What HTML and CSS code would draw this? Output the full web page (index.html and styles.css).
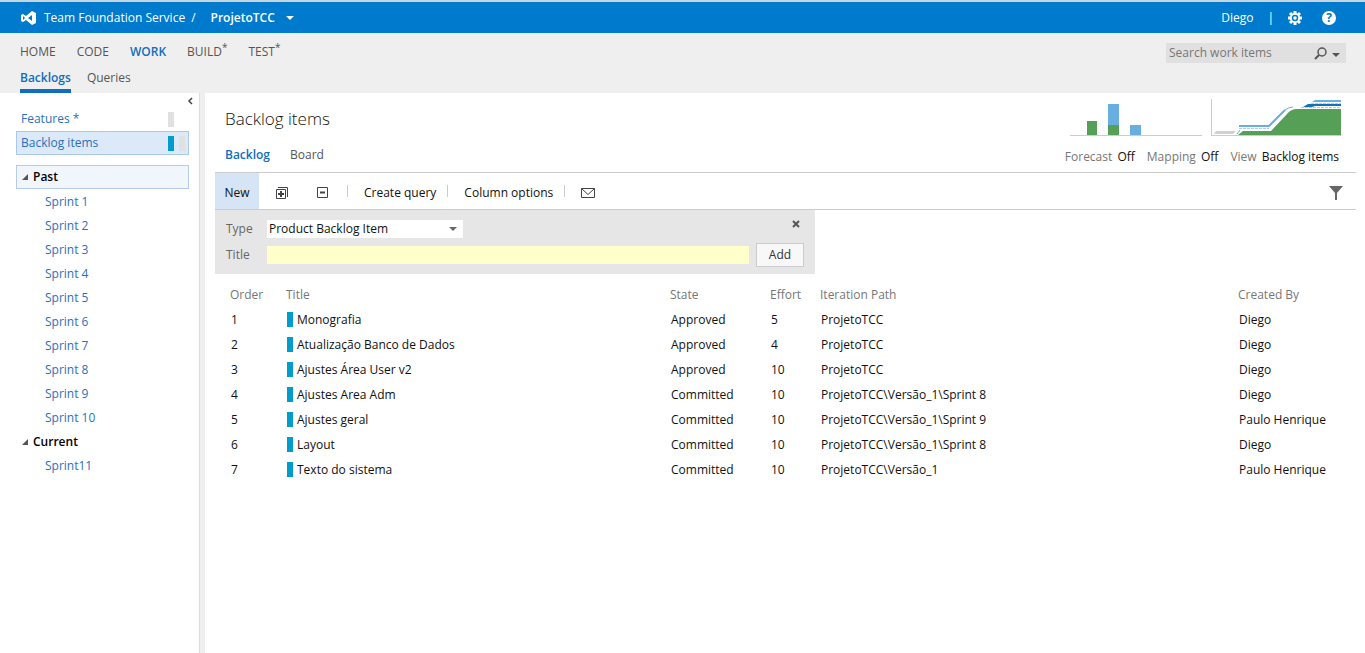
FILE: index.html
```
<!DOCTYPE html>
<html lang="en">
  <head>
    <meta charset="UTF-8" />
    <meta name="viewport" content="width=device-width, initial-scale=1.0" />
    <title>Backlog items - Team Foundation Service</title>
    <link rel="stylesheet" href="styles.css">
  </head>
  <body>
    <header class="header">
      <svg class="logo" width="16" height="14" viewBox="0 0 16 14">
        <path fill="#fff" fill-rule="evenodd" d="M11 0L15 2V12L11 14L5 9L2 11L0 10V4L2 3L5 5ZM11 4L7 7L11 10ZM2 5V9L4 7Z" />
      </svg>
      <a class="brand" href="#">Team Foundation Service</a>
      <span class="slash">/</span>
      <button class="project">ProjetoTCC <i class="caret"></i></button>
      <div class="user">
        <a href="#">Diego</a>
        <span class="bar">|</span>
        <button aria-label="Settings">
          <svg width="14" height="14" viewBox="0 0 14 14">
            <path stroke="#fff" stroke-width="3" d="M7 0V14M0 7H14M2 2L12 12M12 2L2 12" />
            <circle cx="7" cy="7" r="5" fill="#fff" />
            <circle cx="7" cy="7" r="2.500" fill="#fff" stroke="#007acc" stroke-width="1.500" />
          </svg>
        </button>
        <button class="help" aria-label="Help">?</button>
      </div>
    </header>

    <div class="nav">
      <div>
        <nav class="hubs">
          <a href="#">HOME</a>
          <a href="#">CODE</a>
          <a class="active" href="#">WORK</a>
          <a href="#">BUILD<sup>*</sup></a>
          <a href="#">TEST<sup>*</sup></a>
        </nav>
        <nav class="sub-hubs">
          <a class="active" href="#">Backlogs</a>
          <a href="#">Queries</a>
        </nav>
      </div>
      <form class="search">
        <input type="text" placeholder="Search work items" aria-label="Search work items" />
        <button type="button" aria-label="Search">
          <svg width="13" height="13" viewBox="0 0 13 13" fill="none" stroke="#555">
            <circle cx="8" cy="5" r="4" stroke-width="1.5" />
            <path stroke-width="2" d="M5 8L1 12" />
          </svg>
        </button>
        <button type="button" aria-label="Search options"><i class="caret"></i></button>
      </form>
    </div>

    <div class="content">
      <aside class="sidebar">
        <button class="collapse" aria-label="Collapse">
          <svg width="6" height="8" viewBox="0 0 6 8" fill="none" stroke="#444" stroke-width="1.5"><path d="M5 1L2 4L5 7" /></svg>
        </button>
        <ul class="levels">
          <li><a href="#">Features *</a><i class="mark"></i></li>
          <li class="active"><a href="#">Backlog items</a><i class="mark blue"></i><i class="mark"></i></li>
        </ul>
        <h3 class="group boxed"><i class="arrow"></i>Past</h3>
        <ul class="sprints">
          <li><a href="#">Sprint 1</a></li>
          <li><a href="#">Sprint 2</a></li>
          <li><a href="#">Sprint 3</a></li>
          <li><a href="#">Sprint 4</a></li>
          <li><a href="#">Sprint 5</a></li>
          <li><a href="#">Sprint 6</a></li>
          <li><a href="#">Sprint 7</a></li>
          <li><a href="#">Sprint 8</a></li>
          <li><a href="#">Sprint 9</a></li>
          <li><a href="#">Sprint 10</a></li>
        </ul>
        <h3 class="group"><i class="arrow"></i>Current</h3>
        <ul class="sprints">
          <li><a href="#">Sprint11</a></li>
        </ul>
      </aside>

      <main class="main">
        <div class="top">
          <div>
            <h1>Backlog items</h1>
            <nav class="tabs">
              <a class="active" href="#">Backlog</a>
              <a href="#">Board</a>
            </nav>
          </div>
          <div class="summary">
            <div class="charts">
              <svg width="132" height="37" viewBox="0 0 132 37">
                <path fill="#ccc" d="M0 36H132V37H0Z" />
                <path fill="#569f56" d="M17 22H27V36H17ZM38 26H49V36H38Z" />
                <path fill="#69aee0" d="M38 5H49V26H38ZM60 26H71V36H60Z" />
              </svg>
              <svg width="130" height="37" viewBox="0 0 130 37">
                <path fill="#ccc" d="M0 0H1V36H130V37H0Z" />
                <path fill="#d0d0d0" d="M5 32H25L22 35H3Z" />
                <path fill="#569f56" d="M27 36L32 32H60L76 15Q80 10 86 10H130V36Z" />
                <path fill="none" stroke="#69aee0" stroke-width="2" d="M28 27H58L74 11" />
                <path fill="none" stroke="#69aee0" d="M74 11Q78 8 82 8M26 35L29 31" />
                <path fill="none" stroke="#a9d0ee" stroke-dasharray="3 1" d="M28 29.500H58M100 4.500H130M90 8.500H130" />
                <path fill="#1072ba" d="M92 8L97 5H130V7H104L101 8Z" />
                <path fill="#69aee0" d="M101 3L104 1H130V3Z" />
              </svg>
            </div>
            <div class="options">
              <span>Forecast <a href="#">Off</a></span>
              <span>Mapping <a href="#">Off</a></span>
              <span>View <a href="#">Backlog items</a></span>
            </div>
          </div>
        </div>

        <div class="toolbar">
          <button class="new">New</button>
          <button class="icon" aria-label="Expand all">
            <svg width="12" height="12" viewBox="0 0 12 12" fill="none" stroke="#444"><path d="M.5 2.5H9.500V11.500H.5ZM2 .5H11.500V10" /><path stroke-width="2" d="M2 7H8M5 4V10" /></svg>
          </button>
          <button class="icon" aria-label="Collapse all">
            <svg width="11" height="11" viewBox="0 0 11 11" fill="none" stroke="#444"><path d="M.5 .5H10.500V10.500H.5Z" /><path stroke-width="2" d="M3 5.500H8" /></svg>
          </button>
          <i class="sep"></i>
          <button>Create query</button>
          <i class="sep"></i>
          <button>Column options</button>
          <i class="sep"></i>
          <button aria-label="Email">
            <svg width="14" height="10" viewBox="0 0 14 10" fill="none" stroke="#444"><path d="M.5 .5H13.500V9.500H.5ZM.5 .5L7 6.500L13.500 .5" /></svg>
          </button>
          <button class="filter" aria-label="Filter">
            <svg width="14" height="14" viewBox="0 0 14 14"><path fill="#666" d="M0 0H14L8 7V14H6V7Z" /></svg>
          </button>
        </div>

        <form class="add-panel">
          <label for="type">Type</label>
          <div class="select">
            <select id="type">
              <option>Product Backlog Item</option>
            </select>
            <i class="caret"></i>
          </div>
          <button class="close" type="button" aria-label="Close">
            <svg width="8" height="8" viewBox="0 0 8 8" stroke="#555" stroke-width="2"><path d="M1 1L7 7M7 1L1 7" /></svg>
          </button>
          <label for="title">Title</label>
          <input id="title" type="text" />
          <button class="add" type="button">Add</button>
        </form>

        <table class="grid">
          <thead>
            <tr>
              <th class="order">Order</th>
              <th class="title">Title</th>
              <th class="state">State</th>
              <th class="effort">Effort</th>
              <th class="path">Iteration Path</th>
              <th>Created By</th>
            </tr>
          </thead>
          <tbody>
            <tr><td>1</td><td><i class="mark blue"></i>Monografia</td><td>Approved</td><td>5</td><td>ProjetoTCC</td><td>Diego</td></tr>
            <tr><td>2</td><td><i class="mark blue"></i>Atualização Banco de Dados</td><td>Approved</td><td>4</td><td>ProjetoTCC</td><td>Diego</td></tr>
            <tr><td>3</td><td><i class="mark blue"></i>Ajustes Área User v2</td><td>Approved</td><td>10</td><td>ProjetoTCC</td><td>Diego</td></tr>
            <tr><td>4</td><td><i class="mark blue"></i>Ajustes Area Adm</td><td>Committed</td><td>10</td><td>ProjetoTCC\Versão_1\Sprint 8</td><td>Diego</td></tr>
            <tr><td>5</td><td><i class="mark blue"></i>Ajustes geral</td><td>Committed</td><td>10</td><td>ProjetoTCC\Versão_1\Sprint 9</td><td>Paulo Henrique</td></tr>
            <tr><td>6</td><td><i class="mark blue"></i>Layout</td><td>Committed</td><td>10</td><td>ProjetoTCC\Versão_1\Sprint 8</td><td>Diego</td></tr>
            <tr><td>7</td><td><i class="mark blue"></i>Texto do sistema</td><td>Committed</td><td>10</td><td>ProjetoTCC\Versão_1</td><td>Paulo Henrique</td></tr>
          </tbody>
        </table>
      </main>
    </div>
  </body>
</html>
```
FILE: styles.css
```
* {
  box-sizing: border-box;
}
body {
  display: flex;
  flex-direction: column;
  min-height: 100vh;
  margin: 0;
  font: 12px/24px "Open Sans", "Noto Sans", sans-serif;
  color: #111;
  background: #fff;
}
ul {
  margin: 0;
  padding: 0;
  list-style: none;
}
a {
  color: inherit;
  text-decoration: none;
}
button,
input,
select {
  margin: 0;
  padding: 0;
  border: 0;
  border-radius: 0;
  font: inherit;
  color: inherit;
  background: none;
}
svg {
  display: block;
}
.caret {
  display: inline-block;
  border: 4px solid transparent;
  border-top-color: currentColor;
  border-bottom: 0;
}

/* header */
.header {
  display: flex;
  align-items: center;
  height: 33px;
  padding: 0 29px 0 21px;
  border-top: 2px solid #c8d4dc;
  color: #fff;
  background: #007acc;
}
.brand {
  margin-left: 7px;
}
.slash {
  margin: 0 15px 0 6px;
}
.project {
  font-weight: 600;
}
.project .caret {
  margin-left: 8px;
  vertical-align: 2px;
}
.user {
  display: flex;
  align-items: center;
  margin-left: auto;
}
.user .bar {
  margin: 0 14px;
}
.help {
  width: 14px;
  height: 14px;
  margin-left: 20px;
  border-radius: 50%;
  font-weight: 700;
  line-height: 14px;
  color: #007acc;
  background: #fff;
}

/* nav */
.nav {
  display: flex;
  justify-content: space-between;
  padding: 6px 19px 0 20px;
  color: #555;
  background: #efefef;
}
.hubs,
.sub-hubs {
  display: flex;
}
.hubs {
  gap: 21px;
  height: 26px;
  line-height: 26px;
}
.hubs sup {
  font-size: 10px;
  line-height: 0;
}
.sub-hubs {
  gap: 16px;
  line-height: 26px;
}
.sub-hubs a {
  height: 28px;
  border-bottom: 4px solid transparent;
}
.nav .active {
  font-weight: 600;
  color: #106ebe;
}
.sub-hubs .active {
  border-color: #106ebe;
}
.search {
  display: flex;
  align-items: center;
  width: 180px;
  height: 20px;
  margin-top: 4px;
  padding: 0 6px 0 3px;
  background: #e0e0e0;
}
.search input {
  flex: 1;
  min-width: 0;
  height: 20px;
}
.search input::placeholder {
  color: #777;
}
.search button + button {
  margin-left: 5px;
  line-height: 12px;
}

/* sidebar */
.content {
  display: flex;
  flex: 1;
}
.sidebar {
  position: relative;
  width: 205px;
  padding: 14px 16px 0;
  border-right: 5px solid #efefef;
  box-shadow: inset -1px 0 #ddd;
  color: #2a70c0;
}
.sidebar .levels,
.sidebar .group {
  width: 173px;
}
.collapse {
  position: absolute;
  top: 4px;
  right: 7px;
}
.levels li {
  display: flex;
  align-items: center;
  height: 24px;
  padding: 0 15px 0 5px;
}
.levels a {
  flex: 1;
  line-height: 26px;
}
.levels .active {
  padding: 0 3px 0 4px;
  border: 1px solid #a9c9ec;
  background: #dbe9f8;
}
.mark {
  display: inline-block;
  width: 6px;
  height: 15px;
  background: #e0e0e0;
}
.mark.blue {
  background: #009ccc;
}
.levels .mark + .mark {
  margin-left: 5px;
}
.group {
  display: flex;
  align-items: center;
  height: 24px;
  margin: 0;
  padding-left: 6px;
  font-size: 12px;
  font-weight: 600;
  line-height: 26px;
  color: #000;
}
.boxed {
  margin: 10px 0 1px;
  padding-left: 5px;
  border: 1px solid #b5cdea;
  background: #f1f6fd;
}
.arrow {
  margin-right: 5px;
  border-left: 6px solid transparent;
  border-bottom: 6px solid #555;
}
.sprints a {
  display: block;
  padding-left: 29px;
}

/* main */
.main {
  flex: 1;
  min-width: 0;
  padding: 0 9px 0 10px;
}
.top {
  display: flex;
  justify-content: space-between;
  height: 79px;
  padding: 6px 15px 0 10px;
}
h1 {
  margin: 7px 0 11px;
  font-size: 17px;
  font-weight: 300;
  line-height: 26px;
}
.tabs {
  display: flex;
  gap: 20px;
  color: #555;
}
.tabs .active {
  font-weight: 600;
  color: #106ebe;
}
.charts {
  display: flex;
  justify-content: flex-end;
  gap: 9px;
}
.options {
  display: flex;
  justify-content: flex-end;
  gap: 12px;
  margin-top: 9px;
  padding-right: 2px;
  color: #777;
}
.options a {
  margin-left: 2px;
  color: #111;
}
.toolbar {
  display: flex;
  align-items: center;
  height: 38px;
  padding-right: 13px;
  border: solid #ccc;
  border-width: 1px 0;
}
.toolbar button {
  padding-top: 3px;
}
.toolbar .new {
  width: 44px;
  height: 36px;
  background: #d6e5f5;
}
.icon {
  margin-left: 17px;
}
.icon + .icon {
  margin-left: 29px;
}
.sep {
  width: 1px;
  height: 12px;
  margin: 0 16px 0 11px;
  background: #ccc;
}
.icon + .sep {
  margin-left: 19px;
}
.filter {
  margin-left: auto;
}

/* new item */
.add-panel {
  display: grid;
  grid-template-columns: 34px 1fr 48px;
  gap: 2px 7px;
  align-items: center;
  width: 600px;
  padding: 7px 11px;
  color: #666;
  background: #e6e6e6;
}
.select {
  position: relative;
  width: 196px;
  height: 18px;
}
.select select {
  display: block;
  width: 100%;
  height: 18px;
  padding-left: 2px;
  line-height: 18px;
  color: #111;
  background: #fff;
  appearance: none;
}
.select .caret {
  position: absolute;
  top: 7px;
  right: 6px;
  pointer-events: none;
}
.close {
  justify-self: end;
  margin: 0 4px 10px 0;
}
.add-panel input {
  height: 18px;
  padding: 0 2px;
  background: #ffffcc;
}
.add {
  height: 24px;
  border: 1px solid #ccc;
  line-height: 22px;
  color: #333;
  background: #f8f8f8;
}

/* backlog grid */
.grid {
  width: 100%;
  margin-top: 9px;
  padding-left: 10px;
  border-spacing: 0;
  table-layout: fixed;
}
.grid th {
  padding: 0 5px;
  font-weight: 400;
  text-align: left;
  color: #777;
}
.grid td {
  height: 25px;
  padding: 0 6px;
}
.grid .mark {
  margin-right: 4px;
  vertical-align: -3px;
}
.order {
  width: 56px;
}
.title {
  width: 384px;
}
.state {
  width: 100px;
}
.effort {
  width: 50px;
}
.path {
  width: 418px;
}
```
